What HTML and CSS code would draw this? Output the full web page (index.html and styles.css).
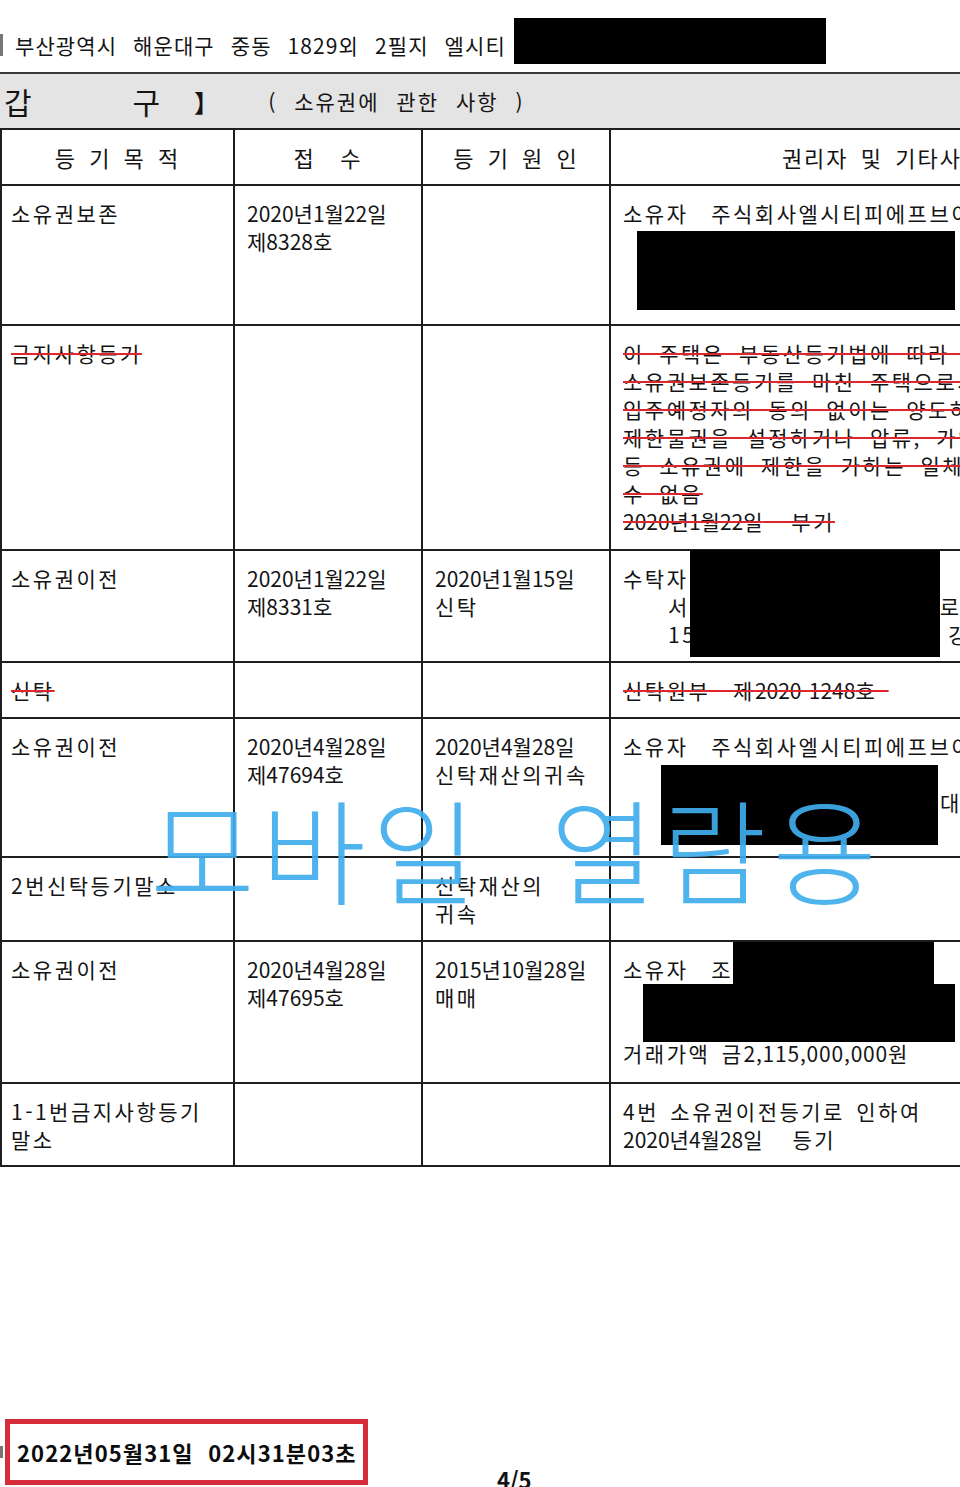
FILE: index.html
```html
<!DOCTYPE html>
<html lang="ko">
<head>
<meta charset="utf-8">
<title>등기사항전부증명서 - 갑구</title>
<link rel="stylesheet" href="styles.css">
</head>
<body>
<div class="page">
  <div class="addr">
    <span class="frag"></span>
    <span class="addr-text">부산광역시 해운대구 중동 1829외 2필지 엘시티</span>
    <span class="redact addr-redact"></span>
  </div>

  <div class="band">
    <span class="band-gap">갑</span>
    <span class="band-gu">구</span>
    <span class="band-br">】</span>
    <span class="band-sub">( 소유권에 관한 사항 )</span>
  </div>

  <div class="grid">
    <div class="cell head">등 기 목 적</div>
    <div class="cell head">접 &nbsp;수</div>
    <div class="cell head">등 기 원 인</div>
    <div class="cell head head-wide">권리자 및 기타사항</div>

    <div class="cell c1">소유권보존</div>
    <div class="cell c2"><span class="num">2020년1월22일</span><br><span class="num">제8328호</span></div>
    <div class="cell c3"></div>
    <div class="cell c4">소유자 &nbsp;주식회사엘시티피에프브이<br>&nbsp;<br>&nbsp;<br>&nbsp;
      <span class="redact r1"></span>
    </div>

    <div class="cell c1"><span class="strike">금지사항등기</span></div>
    <div class="cell c2"></div>
    <div class="cell c3"></div>
    <div class="cell c4 spaced">
      <span class="strike">이 주택은 부동산등기법에 따라 &nbsp; &nbsp; &nbsp; &nbsp;</span><br>
      <span class="strike">소유권보존등기를 마친 주택으로서</span><br>
      <span class="strike">입주예정자의 동의 없이는 양도하거나</span><br>
      <span class="strike">제한물권을 설정하거나 압류, 가압류</span><br>
      <span class="strike">등 소유권에 제한을 가하는 일체의 행위를</span><br>
      <span class="strike">수 없음</span><br>
      <span class="strike"><span class="num">2020년1월22일</span>&nbsp; 부기</span>
    </div>

    <div class="cell c1">소유권이전</div>
    <div class="cell c2"><span class="num">2020년1월22일</span><br><span class="num">제8331호</span></div>
    <div class="cell c3"><span class="num">2020년1월15일</span><br>신탁</div>
    <div class="cell c4">수탁자<br><span class="indent">서<span class="gap-a"></span>로</span><br><span class="indent">15<span class="gap-b"></span>강</span>
      <span class="redact r2"></span>
    </div>

    <div class="cell c1"><span class="strike">신탁</span></div>
    <div class="cell c2"></div>
    <div class="cell c3"></div>
    <div class="cell c4"><span class="strike">신탁원부&nbsp; 제<span class="num">2020-1248</span>호&nbsp;</span></div>

    <div class="cell c1">소유권이전</div>
    <div class="cell c2"><span class="num">2020년4월28일</span><br><span class="num">제47694호</span></div>
    <div class="cell c3"><span class="num">2020년4월28일</span><br>신탁재산의귀속</div>
    <div class="cell c4">소유자 &nbsp;주식회사엘시티피에프브이<br>&nbsp;<br><span class="far">대</span><br>&nbsp;
      <span class="redact r3"></span>
    </div>

    <div class="cell c1">2번신탁등기말소</div>
    <div class="cell c2"></div>
    <div class="cell c3">신탁재산의<br>귀속</div>
    <div class="cell c4"></div>

    <div class="cell c1">소유권이전</div>
    <div class="cell c2"><span class="num">2020년4월28일</span><br><span class="num">제47695호</span></div>
    <div class="cell c3"><span class="num">2015년10월28일</span><br>매매</div>
    <div class="cell c4">소유자 &nbsp;조<br>&nbsp;<br>&nbsp;<br>거래가액 금<span class="amount">2,115,000,000</span>원
      <span class="redact r4"></span>
      <span class="redact r5"></span>
    </div>

    <div class="cell c1">1-1번금지사항등기<br>말소</div>
    <div class="cell c2"></div>
    <div class="cell c3"></div>
    <div class="cell c4">4번 소유권이전등기로 인하여<br><span class="num">2020년4월28일</span><span class="gap-c"></span>등기</div>
  </div>

  <div class="footer">
    <span class="frag2"></span>
    <div class="stamp">2022년05월31일&nbsp; 02시31분03초</div>
    <div class="pagenum">4/5</div>
  </div>

  <div class="watermark">모바일 열람용</div>
</div>
</body>
</html>
```

FILE: styles.css
```css
html, body {
  margin: 0;
  padding: 0;
  background: #ffffff;
}
body {
  width: 960px;
  height: 1487px;
  overflow: hidden;
  font-family: "Noto Sans CJK KR", "Noto Sans CJK SC", sans-serif;
  color: #141414;
}
.page {
  position: relative;
  width: 960px;
  height: 1487px;
  overflow: hidden;
}

/* address line */
.addr {
  height: 72px;
  box-sizing: border-box;
  padding-top: 10px;
  display: flex;
  align-items: center;
  white-space: nowrap;
}
.frag {
  width: 3px;
  height: 22px;
  background: #777;
  margin-top: 8px;
  margin-right: 12px;
}
.addr-text {
  font-size: 21px;
  letter-spacing: 1.1px;
  word-spacing: 9px;
  margin-top: 8px;
}
.redact {
  background: #000;
  display: block;
}
.addr-redact {
  width: 312px;
  height: 46px;
  margin-left: 8px;
}

/* gray band */
.band {
  border-top: 2px solid #3a3a3a;
  height: 54px;
  background: #e4e4e4;
  display: flex;
  align-items: center;
  white-space: nowrap;
}
.band-gap {
  font-size: 30px;
  margin-left: 4px;
}
.band-gu {
  font-size: 30px;
  margin-left: 101px;
}
.band-br {
  font-size: 24px;
  font-weight: bold;
  margin-left: 34px;
}
.band-sub {
  font-size: 21px;
  margin-left: 50px;
  letter-spacing: 2px;
  word-spacing: 9px;
}

/* table grid */
.grid {
  display: grid;
  width: 1157px;
  grid-template-columns: 233px 188px 188px 546px;
  grid-template-rows: 56px 140px 225px 112px 56px 139px 84px 142px 83px;
  border-top: 2px solid #1e1e1e;
  border-left: 2px solid #1e1e1e;
}
.cell {
  position: relative;
  border-right: 2px solid #1e1e1e;
  border-bottom: 2px solid #1e1e1e;
  font-size: 21px;
  line-height: 28px;
  letter-spacing: 2.5px;
  word-spacing: 3px;
  padding: 13px 0 0 12px;
  white-space: nowrap;
  overflow: visible;
}
.c1 { padding-left: 9px; }
.c4 { padding-left: 12px; }
.head {
  padding: 0;
  display: flex;
  align-items: center;
  justify-content: center;
  font-size: 22px;
  letter-spacing: 2px;
  word-spacing: 4px;
}
.head-wide {
  justify-content: center;
}
.num {
  letter-spacing: 0px;
  word-spacing: 3px;
}
.amount {
  letter-spacing: 0.8px;
}
.spaced {
  word-spacing: 6px;
}
.strike {
  text-decoration: line-through;
  text-decoration-color: #e0262c;
  text-decoration-thickness: 2px;
}
.indent {
  padding-left: 45px;
}
.gap-a {
  display: inline-block;
  width: 250px;
}
.gap-b {
  display: inline-block;
  width: 252px;
}
.gap-c {
  display: inline-block;
  width: 30px;
}
.far {
  padding-left: 317px;
}
.r1 { position: absolute; left: 26px; top: 45px; width: 318px; height: 79px; }
.r2 { position: absolute; left: 79px; top: -1px; width: 250px; height: 107px; }
.r3 { position: absolute; left: 50px; top: 46px; width: 277px; height: 80px; }
.r4 { position: absolute; left: 122px; top: 0px; width: 201px; height: 42px; }
.r5 { position: absolute; left: 32px; top: 42px; width: 312px; height: 58px; }

/* footer */
.footer {
  display: flex;
  align-items: flex-start;
  margin-top: 252px;
}
.frag2 {
  width: 3px;
  height: 12px;
  background: #777;
  margin-top: 27px;
  margin-right: 2px;
}
.stamp {
  box-sizing: border-box;
  width: 363px;
  height: 66px;
  border: 5px solid #d62d3b;
  font-size: 22px;
  font-weight: bold;
  letter-spacing: 1.1px;
  display: flex;
  align-items: center;
  padding-left: 7px;
  white-space: nowrap;
  color: #0c0c0c;
}
.pagenum {
  font-size: 22px;
  font-weight: bold;
  margin-left: 129px;
  margin-top: 44px;
  color: #111;
}

/* watermark overlay */
.watermark {
  position: absolute;
  left: 150px;
  top: 790px;
  font-size: 114px;
  line-height: 1;
  font-weight: 200;
  letter-spacing: 6px;
  word-spacing: 30px;
  color: rgba(64, 172, 236, 0.92);
  white-space: nowrap;
  pointer-events: none;
}
```
